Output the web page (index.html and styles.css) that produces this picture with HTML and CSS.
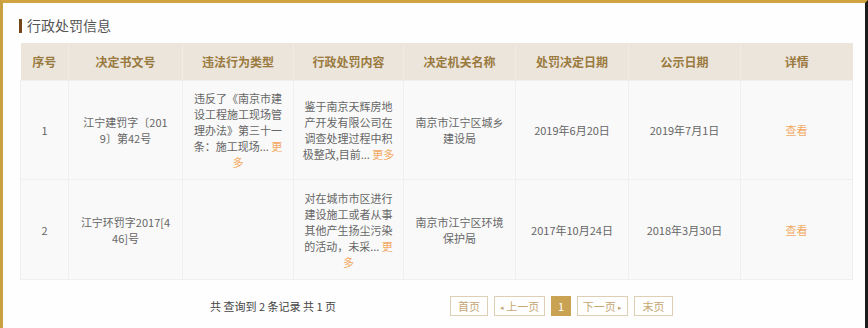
FILE: index.html
```html
<!DOCTYPE html>
<html lang="zh-CN">
<head>
<meta charset="utf-8">
<title>行政处罚信息</title>
<link rel="stylesheet" href="styles.css">
</head>
<body>
<div class="frame">
  <h2 class="title"><span class="title-bar"></span>行政处罚信息</h2>
  <table class="grid">
    <colgroup>
      <col class="c1"><col class="c2"><col class="c3"><col class="c4"><col class="c5"><col class="c6"><col class="c7"><col class="c8">
    </colgroup>
    <thead>
      <tr>
        <th>序号</th><th>决定书文号</th><th>违法行为类型</th><th>行政处罚内容</th><th>决定机关名称</th><th>处罚决定日期</th><th>公示日期</th><th>详情</th>
      </tr>
    </thead>
    <tbody>
      <tr class="r1">
        <td>1</td>
        <td>江宁建罚字〔201<br>9〕第42号</td>
        <td class="txt">违反了《南京市建设工程施工现场管理办法》第三十一条：施工现场... <a class="more">更多</a></td>
        <td class="txt">鉴于南京天辉房地产开发有限公司在调查处理过程中积极整改,目前... <a class="more">更多</a></td>
        <td class="org">南京市江宁区城乡<br>建设局</td>
        <td>2019年6月20日</td>
        <td>2019年7月1日</td>
        <td><a class="view">查看</a></td>
      </tr>
      <tr class="r2">
        <td>2</td>
        <td>江宁环罚字2017[4<br>46]号</td>
        <td class="txt"></td>
        <td class="txt">对在城市市区进行建设施工或者从事其他产生扬尘污染的活动，未采... <a class="more">更多</a></td>
        <td class="org">南京市江宁区环境<br>保护局</td>
        <td>2017年10月24日</td>
        <td>2018年3月30日</td>
        <td><a class="view">查看</a></td>
      </tr>
    </tbody>
  </table>
  <div class="pager">
    <span class="info">共 查询到 2 条记录 共 1 页</span>
    <div class="btns">
      <a class="btn w38">首页</a>
      <a class="btn w51"><span class="arr">◂</span> 上一页</a>
      <a class="btn cur">1</a>
      <a class="btn w51">下一页 <span class="arr">▸</span></a>
      <a class="btn w39">末页</a>
    </div>
  </div>
</div>
</body>
</html>
```
FILE: styles.css
```css
html, body {
  margin: 0;
  padding: 0;
  background: #fefefe;
}
body {
  font-family: "Noto Sans CJK SC", "Noto Sans", sans-serif;
  color: #666;
}
.frame {
  box-sizing: border-box;
  width: 868px;
  height: 328px;
  border-top: 3px solid #d2a441;
  border-left: 3px solid #c99f3f;
  border-right: 3px solid #1b1b1b;
  padding: 0 13px 0 16px;
  overflow: hidden;
}
.title {
  display: flex;
  align-items: center;
  margin: 14px 0 0 0;
  height: 17px;
  font-size: 14px;
  font-weight: normal;
  color: #555;
  line-height: 17px;
}
.title-bar {
  width: 3px;
  height: 14px;
  background: #74461a;
  margin-right: 5px;
}
.grid {
  margin: 9px 0 0 1px;
  width: 832px;
  table-layout: fixed;
  border-collapse: collapse;
}
.c1 { width: 48px; }
.c2 { width: 114px; }
.c3 { width: 111px; }
.c4 { width: 110px; }
.c5 { width: 112px; }
.c6 { width: 113px; }
.c7 { width: 112px; }
.c8 { width: 112px; }
.grid th {
  height: 37px;
  padding: 0;
  background: #ebe5dc;
  color: #9a7a3e;
  font-size: 12px;
  font-weight: bold;
  border-left: 1px solid #f1ece5;
  text-align: center;
}
.grid th:first-child { border-left: none; }
.grid td {
  background: #f9f9f9;
  border: 1px solid #efefef;
  text-align: center;
  font-size: 11px;
  line-height: 16px;
  color: #666;
  padding: 0 11px;
  word-break: break-all;
}
.grid tr.r1 td { height: 98px; }
.grid tr.r2 td { height: 99px; }
.grid td.txt { padding: 0 8px; }
.grid td.org { padding: 0 6px; }
.more, .view {
  color: #f2a962;
  cursor: pointer;
}
.pager {
  display: flex;
  align-items: center;
  margin-top: 16px;
  height: 20px;
}
.info {
  margin-left: 191px;
  font-size: 11px;
  color: #444;
  width: 240px;
}
.btns {
  display: flex;
  gap: 6px;
}
.btn {
  box-sizing: border-box;
  height: 20px;
  border: 1px solid #dccfb3;
  color: #c4a773;
  font-size: 11px;
  line-height: 18px;
  text-align: center;
  background: #fff;
}
.w38 { width: 38px; }
.w39 { width: 39px; }
.w51 { width: 51px; }
.btn.cur {
  width: 20px;
  background: #c9a253;
  border-color: #c9a253;
  color: #fff;
}
.arr {
  font-size: 7px;
  vertical-align: 1px;
}
```
